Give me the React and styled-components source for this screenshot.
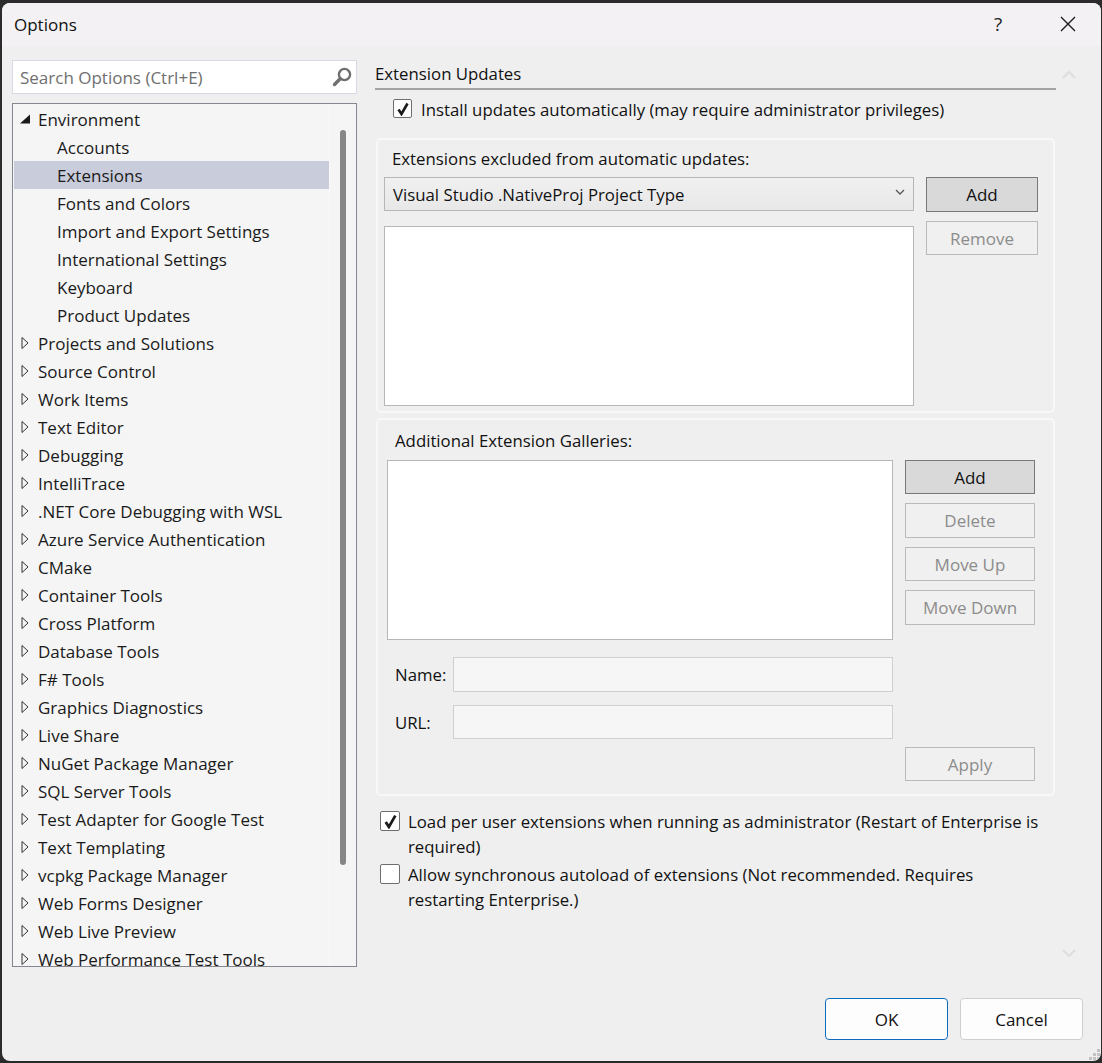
import React from "react";
import styled, { createGlobalStyle } from "styled-components";

const Global = createGlobalStyle`
  html, body { margin: 0; padding: 0; background: #2b2b2b; }
  * { box-sizing: border-box; }
  body { font-family: "Open Sans", "Liberation Sans", sans-serif; }
`;
const Desktop = styled.div`
  width: 1102px; height: 1063px; padding: 3px 1px 2px 2px; background: #2b2b2b; overflow: hidden;
`;
const Win = styled.div`
  position: relative; height: 100%; display: flex; flex-direction: column; background: #efefef;
  border-radius: 8px; overflow: hidden; color: #111; font-size: 17px;
`;
const TitleBar = styled.header`
  height: 43px; flex: none; display: flex; align-items: center; background: #f3f1f3; padding: 0 0 1px 12px;
`;
const Title = styled.div` flex: 1; `;
const Help = styled.div` width: 20px; margin-right: 51px; text-align: center; font-size: 19px; color: #222; `;
const CloseBox = styled.div` width: 18px; margin-right: 24px; height: 18px; display: flex; `;
const Body = styled.div` flex: 1; display: flex; min-height: 0; `;
const Side = styled.aside` width: 345px; margin: 14px 0 0 10px; flex: none; display: flex; flex-direction: column; `;
const Search = styled.div`
  height: 34px; background: #fff; border: 1px solid #d9d9e6; display: flex; align-items: center;
  padding: 0 3px 0 7px; color: #6f6f6f; justify-content: space-between;
`;
const Tree = styled.div`
  margin-top: 9px; height: 864px; background: #f5f5f5; border: 1px solid #85868f; display: flex; overflow: hidden;
`;
const TreeList = styled.ul` list-style: none; margin: 1px 0 0 1px; padding: 0; width: 315px; flex: none; `;
const TreeRow = styled.li`
  height: 28px; display: flex; align-items: center; white-space: nowrap;
  padding-left: ${p => p.$child ? 43 : 5}px; background: ${p => p.$sel ? "#c9ccda" : "transparent"};
  color: #1a1a1a;
`;
const Arrow = styled.span` width: 19px; flex: none; display: flex; `;
const Track = styled.div` flex: 1; border-left: 1px solid #fafafa; padding: 26px 0 0 10px; `;
const Thumb = styled.div` width: 6px; height: 735px; background: #868686; border-radius: 3px; `;
const Main = styled.main` width: 681px; margin: 14px 0 0 18px; flex: none; display: flex; flex-direction: column; font-size: 16.8px; `;
const SectionHead = styled.div`
  height: 30px; border-bottom: 2px solid #a3a3a3; line-height: 28px;
`;
const TopCheck = styled.label` display: flex; align-items: center; margin: 9px 0 20px 18px; height: 19px; gap: 9px; padding-top: 0; `;
const TopText = styled.span` padding-top: 2px; `;
const Box = styled.span`
  width: ${p => p.$s}px; height: ${p => p.$s}px; flex: none; background: #fff; border: 1px solid #6e6e6e;
  border-radius: 2px; display: flex; align-items: center; justify-content: center;
`;
const Group = styled.section`
  margin-left: 1px; width: 679px; height: ${p => p.$h}px; border: 2px solid #f6f8f9; border-radius: 5px;
  margin-bottom: 5px; padding: ${p => p.$pad}; display: grid; grid-template-columns: ${p => p.$cols}; column-gap: 12px; align-content: start;
`;
const GroupLabel = styled.div`
  grid-column: 1 / -1; height: ${p => p.$h}px; line-height: ${p => p.$h}px; margin-bottom: ${p => p.$mb}px; padding-left: ${p => p.$i}px;
`;
const Combo = styled.div`
  height: 34px; background: linear-gradient(#f0f0f0, #e8e8e8); border: 1px solid #b4b6ba; display: flex; align-items: center;
  justify-content: space-between; padding: 0 8px 4px 8px;
`;
const ComboText = styled.span` padding-top: 4px; `;
const Btn = styled.button`
  font: inherit; font-size: 17px; height: ${p => p.$h || 34}px; width: 100%; padding: 0; text-align: center; display: block;
  background: ${p => p.$on ? "#d9d9d9" : "#f0f0f0"}; color: ${p => p.$on ? "#111" : "#8c8c8c"};
  border: 1px solid ${p => p.$on ? "#77787b" : "#b8babd"};
`;
const ListBox = styled.div` background: #fff; border: 1px solid #b5b7ba; height: ${p => p.$h}px; margin-top: ${p => p.$t || 0}px; `;
const Col = styled.div` display: flex; flex-direction: column; gap: ${p => p.$g || 0}px; padding-top: ${p => p.$t || 0}px; `;
const Form = styled.div` display: flex; flex-direction: column; gap: 13px; margin-top: 17px; `;
const FormRow = styled.div` display: flex; align-items: center; `;
const FormLabel = styled.span` width: 58px; margin-left: 8px; flex: none; `;
const Input = styled.div` width: 440px; height: ${p => p.$h}px; background: #f6f6f6; border: 1px solid #cfcfcf; `;
const ApplyRow = styled.div` grid-column: 1 / -1; display: flex; justify-content: flex-end; margin-top: 8px; `;
const ApplyWrap = styled.div` width: 130px; margin-left: auto; `;
const CheckRow = styled.label`
  display: flex; gap: 8px; margin-left: 5px; width: 663px; line-height: 25px; margin-top: ${p => p.$t}px;
`;
const CheckText = styled.span` max-width: 635px; `;
const CheckBoxWrap = styled.span` padding-top: 2px; flex: none; `;
const ScrollCol = styled.div`
  width: 26px; flex: none; margin-top: 24px; height: 888px; display: flex; flex-direction: column; justify-content: space-between; align-items: center;
`;
const Footer = styled.footer`
  flex: none; height: 63px; display: flex; justify-content: flex-end; gap: 12px; padding: 0 18px 21px 0;
`;
const DlgBtn = styled.button`
  font: inherit; width: 123px; height: 42px; background: #fdfdfd; color: #111; border-radius: 4px; padding: 0;
  border: 1px solid ${p => p.$primary ? "#0f6cbd" : "#cfcfcf"};
`;
const Grip = styled.svg` position: absolute; right: 0; bottom: 0; `;

const envChildren = ["Accounts","Extensions","Fonts and Colors","Import and Export Settings","International Settings","Keyboard","Product Updates"];
const roots = ["Projects and Solutions","Source Control","Work Items","Text Editor","Debugging","IntelliTrace",".NET Core Debugging with WSL","Azure Service Authentication","CMake","Container Tools","Cross Platform","Database Tools","F# Tools","Graphics Diagnostics","Live Share","NuGet Package Manager","SQL Server Tools","Test Adapter for Google Test","Text Templating","vcpkg Package Manager","Web Forms Designer","Web Live Preview","Web Performance Test Tools"];

const Check = ({ s = 14 }) => (
  <svg width={s} height={s} viewBox="0 0 14 14" fill="none"><path d="M2.5 7.5 L5.5 12 L11.5 1.5" stroke="#1a1a1a" strokeWidth="2.6" /></svg>
);
const Chevron = ({ up }) => (
  <svg width="14" height="9" viewBox="0 0 14 9" fill="none"><path d={up ? "M1 8 L7 2 L13 8" : "M1 1 L7 7 L13 1"} stroke="#dedede" strokeWidth="2" /></svg>
);

export default function App() {
  return (
    <Desktop>
      <Global />
      <Win>
        <TitleBar>
          <Title>Options</Title>
          <Help>?</Help>
          <CloseBox><svg width="18" height="18" viewBox="0 0 18 18"><path d="M2 2 L16 16 M16 2 L2 16" stroke="#1c1c1c" strokeWidth="1.4" /></svg></CloseBox>
        </TitleBar>
        <Body>
          <Side>
            <Search>
              <span>Search Options (Ctrl+E)</span>
              <svg width="22" height="22" viewBox="0 0 22 22" fill="none">
                <circle cx="13.5" cy="8.5" r="5.6" stroke="#6f6f6f" strokeWidth="2.4" />
                <path d="M9.2 12.8 L3.5 18.5" stroke="#6f6f6f" strokeWidth="3.4" strokeLinecap="round" />
              </svg>
            </Search>
            <Tree>
              <TreeList>
                <TreeRow>
                  <Arrow><svg width="12" height="12" viewBox="0 0 12 12"><path d="M1 10.5 L11 10.5 L11 1.5 Z" fill="#1a1a1a" /></svg></Arrow>
                  Environment
                </TreeRow>
                {envChildren.map(c => <TreeRow key={c} $child $sel={c === "Extensions"}>{c}</TreeRow>)}
                {roots.map(c => (
                  <TreeRow key={c}>
                    <Arrow><svg width="12" height="14" viewBox="0 0 12 14" fill="none"><path d="M3 1.5 L9 7 L3 12.5 Z" stroke="#333" strokeWidth="1" /></svg></Arrow>
                    {c}
                  </TreeRow>
                ))}
              </TreeList>
              <Track><Thumb /></Track>
            </Tree>
          </Side>
          <Main>
            <SectionHead>Extension Updates</SectionHead>
            <TopCheck><Box $s={19}><Check /></Box><TopText>Install updates automatically (may require administrator privileges)</TopText></TopCheck>
            <Group $h={275} $pad="6px 16px 0 6px" $cols="530px 112px">
              <GroupLabel $h={25} $mb={6} $i={8}>Extensions excluded from automatic updates:</GroupLabel>
              <Combo>
                <ComboText>Visual Studio .NativeProj Project Type</ComboText>
                <svg width="10" height="7" viewBox="0 0 10 7" fill="none"><path d="M1 1 L5 5 L9 1" stroke="#555" strokeWidth="1.3" /></svg>
              </Combo>
              <Btn $on $h={35}>Add</Btn>
              <ListBox $h={180} $t={14} />
              <Col $t={9}><Btn>Remove</Btn></Col>
            </Group>
            <Group $h={378} $pad="6px 18px 0 9px" $cols="506px 130px">
              <GroupLabel $h={30} $mb={4} $i={8}>Additional Extension Galleries:</GroupLabel>
              <Col>
                <ListBox $h={180} />
                <Form>
                  <FormRow><FormLabel>Name:</FormLabel><Input $h={35} /></FormRow>
                  <FormRow><FormLabel>URL:</FormLabel><Input $h={34} /></FormRow>
                </Form>
              </Col>
              <Col $g={9}>
                <Btn $on>Add</Btn>
                <Btn $h={35}>Delete</Btn>
                <Btn>Move Up</Btn>
                <Btn $h={35}>Move Down</Btn>
              </Col>
              <ApplyRow><ApplyWrap><Btn>Apply</Btn></ApplyWrap></ApplyRow>
            </Group>
            <CheckRow $t={8}><CheckBoxWrap><Box $s={20}><Check s={15} /></Box></CheckBoxWrap><CheckText>Load per user extensions when running as administrator (Restart of Enterprise is required)</CheckText></CheckRow>
            <CheckRow $t={3}><CheckBoxWrap><Box $s={20} /></CheckBoxWrap><CheckText>Allow synchronous autoload of extensions (Not recommended. Requires restarting Enterprise.)</CheckText></CheckRow>
          </Main>
          <ScrollCol><Chevron up /><Chevron /></ScrollCol>
        </Body>
        <Footer>
          <DlgBtn $primary>OK</DlgBtn>
          <DlgBtn>Cancel</DlgBtn>
        </Footer>
        <Grip width="12" height="12" viewBox="0 0 12 12" fill="#c2c2c2">
          <rect x="8" y="0" width="3" height="3" /><rect x="4" y="4" width="3" height="3" /><rect x="8" y="4" width="3" height="3" />
          <rect x="0" y="8" width="3" height="3" /><rect x="4" y="8" width="3" height="3" /><rect x="8" y="8" width="3" height="3" />
        </Grip>
      </Win>
    </Desktop>
  );
}
